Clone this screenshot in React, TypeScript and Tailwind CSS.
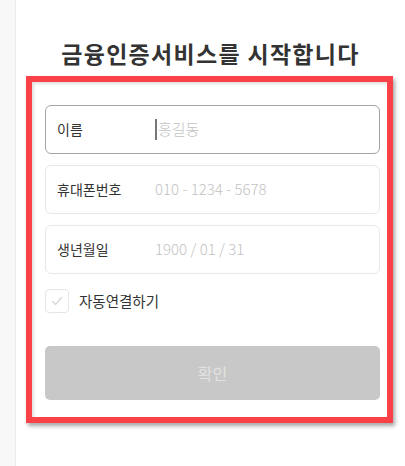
import { useState } from 'react';

const fields = [
  { label: '이름', placeholder: '홍길동', active: true },
  { label: '휴대폰번호', placeholder: '010 - 1234 - 5678', active: false },
  { label: '생년월일', placeholder: '1900 / 01 / 31', active: false },
];

export default function App() {
  const [autoConnect, setAutoConnect] = useState(false);

  return (
    <div
      className="flex h-[466px] w-full bg-white text-[#333]"
      style={{ fontFamily: '"Noto Sans CJK KR", "Noto Sans", sans-serif' }}
    >
      {/* Left rail */}
      <div className="w-[16px] shrink-0 border-r border-[#ececec] bg-[#f8f8f8]" />

      <div className="flex flex-1 flex-col">
        <h1 className="mt-[38px] text-center text-[23px] font-bold leading-[30px] tracking-[1.3px] text-[#333]">
          금융인증서비스를 시작합니다
        </h1>

        {/* Highlighted form */}
        <div className="ml-[10px] mt-[8px] w-[367px] border-[6px] border-[#fa4147] bg-white pb-[17px] pl-[13px] pr-[7px] pt-[23px] shadow-[inset_2px_2px_3px_rgba(0,0,0,0.12),2px_3px_4px_rgba(0,0,0,0.35)]">
          <div className="flex flex-col gap-[11px]">
            {fields.map((f) => (
              <div
                key={f.label}
                className={`flex h-[49px] items-center rounded-[6px] border pl-[11px] ${
                  f.active ? 'border-[#a3a3a3]' : 'border-[#e8e8e8]'
                }`}
              >
                <span className="w-[98px] shrink-0 text-[14px] text-[#333]">{f.label}</span>
                <span className="flex items-center text-[15px] font-light text-[#c2c2c2]">
                  {f.active && <span className="mr-px h-[21px] w-[2px] bg-[#777]" />}
                  {f.placeholder}
                </span>
              </div>
            ))}
          </div>

          <label className="mt-[15px] flex items-center gap-[10px]">
            <button
              type="button"
              onClick={() => setAutoConnect(!autoConnect)}
              className="flex h-[24px] w-[24px] items-center justify-center rounded-[4px] border border-[#e6e6e6] bg-white"
            >
              <svg width="14" height="14" viewBox="0 0 14 14" fill="none">
                <path
                  d="M2.5 7.5 L5.5 10.5 L11.5 3.5"
                  stroke={autoConnect ? '#555' : '#d8d8d8'}
                  strokeWidth="1.4"
                  strokeLinecap="round"
                  strokeLinejoin="round"
                />
              </svg>
            </button>
            <span className="text-[14.5px] text-[#333]">자동연결하기</span>
          </label>

          <button
            type="button"
            className="mt-[33px] flex h-[54px] w-[335px] items-center justify-center rounded-[5px] bg-[#c8c8c8] text-[16px] text-[#e2e2e2]"
          >
            확인
          </button>
        </div>
      </div>
    </div>
  );
}
